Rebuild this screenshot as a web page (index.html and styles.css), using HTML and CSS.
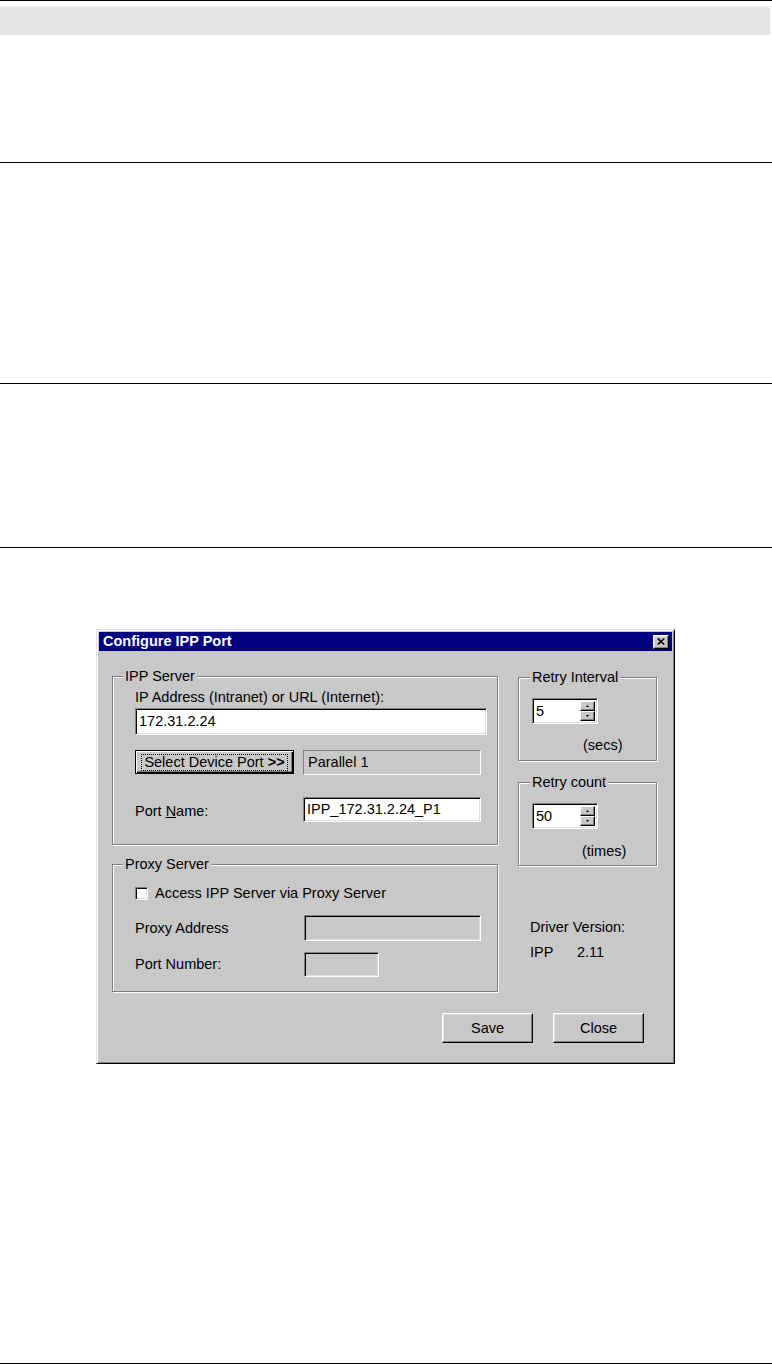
FILE: index.html
```html
<!DOCTYPE html>
<html lang="en">
<head>
    <meta charset="UTF-8">
    <meta name="viewport" content="width=device-width, initial-scale=1.0">
    <title>Configure IPP Port</title>
    <link rel="stylesheet" href="styles.css">
</head>
<body>
    <div class="section section-head">
        <div class="band"></div>
    </div>
    <div class="section section-mid"></div>
    <div class="section section-low"></div>

    <div class="section section-fig">
        <div class="dialog">
            <div class="titlebar">
                <span class="title">Configure IPP Port</span>
                <span class="close-btn">
                    <svg width="8" height="7" viewBox="0 0 8 7"><path d="M0.8 0.5L7.2 6.5M7.2 0.5L0.8 6.5" stroke="#000" stroke-width="1.7"/></svg>
                </span>
            </div>

            <div class="dialog-body">
                <div class="columns">
                    <div class="col-left">
                        <div class="group group-ipp">
                            <span class="legend">IPP Server</span>
                            <div class="field-label">IP Address (Intranet) or URL (Internet):</div>
                            <div class="edit edit-url">172.31.2.24</div>
                            <div class="row row-device">
                                <span class="btn btn-default"><span class="focus">Select Device Port <b>&gt;&gt;</b></span></span>
                                <div class="static static-port">Parallel 1</div>
                            </div>
                            <div class="row row-portname">
                                <span class="row-label">Port <u>N</u>ame:</span>
                                <div class="edit edit-port">IPP_172.31.2.24_P1</div>
                            </div>
                        </div>

                        <div class="group group-proxy">
                            <span class="legend">Proxy Server</span>
                            <div class="row row-check">
                                <span class="checkbox"></span>
                                <span class="check-label">Access IPP Server via Proxy Server</span>
                            </div>
                            <div class="row row-proxy-addr">
                                <span class="row-label proxy-label">Proxy Address</span>
                                <div class="edit edit-disabled edit-proxy"></div>
                            </div>
                            <div class="row row-proxy-port">
                                <span class="row-label proxy-label">Port Number:</span>
                                <div class="edit edit-disabled edit-portnum"></div>
                            </div>
                        </div>
                    </div>

                    <div class="col-right">
                        <div class="group group-retry">
                            <span class="legend">Retry Interval</span>
                            <div class="edit spinbox">
                                <span class="spin-value">5</span>
                                <span class="spin">
                                    <span class="spin-btn"><svg width="3" height="2" viewBox="0 0 3 2"><path d="M1.5 0L3 2H0z" fill="#000"/></svg></span>
                                    <span class="spin-btn"><svg width="3" height="2" viewBox="0 0 3 2"><path d="M0 0h3L1.5 2z" fill="#000"/></svg></span>
                                </span>
                            </div>
                            <div class="unit unit-secs">(secs)</div>
                        </div>

                        <div class="group group-retry group-count">
                            <span class="legend">Retry count</span>
                            <div class="edit spinbox">
                                <span class="spin-value">50</span>
                                <span class="spin">
                                    <span class="spin-btn"><svg width="3" height="2" viewBox="0 0 3 2"><path d="M1.5 0L3 2H0z" fill="#000"/></svg></span>
                                    <span class="spin-btn"><svg width="3" height="2" viewBox="0 0 3 2"><path d="M0 0h3L1.5 2z" fill="#000"/></svg></span>
                                </span>
                            </div>
                            <div class="unit unit-times">(times)</div>
                        </div>

                        <div class="driver">
                            <div>Driver Version:</div>
                            <div class="driver-row"><span class="driver-name">IPP</span><span>2.11</span></div>
                        </div>
                    </div>
                </div>

                <div class="actions">
                    <span class="btn btn-action">Save</span>
                    <span class="btn btn-action">Close</span>
                </div>
            </div>
        </div>
    </div>
</body>
</html>
```

FILE: styles.css
```css
* {
    box-sizing: border-box;
}

body {
    margin: 0;
    background-color: #fff;
    color: #000;
    font-family: "Liberation Sans", Arial, sans-serif;
    font-size: 14.5px;
    line-height: 17px;
}

/* document rules */
.section {
    border-bottom: 1px solid #000;
}

.section-head {
    height: 163px;
    border-top: 1px solid #000;
}

.band {
    margin-top: 6px;
    margin-right: 2px;
    height: 28px;
    background-color: #e4e4e4;
}

.section-mid {
    height: 221px;
}

.section-low {
    height: 164px;
}

.section-fig {
    height: 816px;
    padding-top: 81px;
}

/* dialog window */
.dialog {
    width: 579px;
    height: 435px;
    margin-left: 96px;
    padding: 2px;
    background-color: #c8c8c8;
    border: 1px solid;
    border-color: #dfdfdf #000 #000 #dfdfdf;
    box-shadow: inset 1px 1px #fff, inset -1px -1px #808080;
}

.titlebar {
    height: 19px;
    background-color: #000080;
    display: flex;
    align-items: center;
    justify-content: space-between;
    padding: 0 3px 0 4px;
}

.title {
    color: #fff;
    font-weight: bold;
}

.close-btn {
    width: 16px;
    height: 14px;
    display: flex;
    align-items: center;
    justify-content: center;
    background-color: #c8c8c8;
    border: 1px solid;
    border-color: #fff #000 #000 #fff;
    box-shadow: inset -1px -1px #808080, inset 1px 1px #dfdfdf;
}

.dialog-body {
    padding: 25px 0 0 13px;
}

.columns {
    display: flex;
    gap: 20px;
}

.col-left {
    width: 386px;
}

.col-right {
    width: 139px;
}

/* etched group boxes */
.group {
    border: 1px solid #808080;
    box-shadow: inset 1px 1px #fff, 1px 1px #fff;
}

.legend {
    display: block;
    width: fit-content;
    margin: -9px 0 0 -12px;
    padding: 0 2px;
    background-color: #c8c8c8;
}

.group-ipp {
    height: 169px;
    padding-left: 22px;
}

.group-proxy {
    height: 128px;
    margin-top: 19px;
    padding-left: 22px;
}

.field-label {
    margin-top: 4px;
}

.row {
    display: flex;
}

.row-label {
    width: 168px;
}

/* controls */
.edit {
    display: flex;
    align-items: center;
    padding-left: 3px;
    background-color: #fff;
    border: 1px solid;
    border-color: #808080 #fff #fff #808080;
    box-shadow: inset 1px 1px #000, inset -1px -1px #dfdfdf;
}

.edit-disabled {
    background-color: #c8c8c8;
}

.edit-url {
    width: 352px;
    height: 27px;
    margin-top: 2px;
}

.row-device {
    margin-top: 15px;
}

.btn {
    display: flex;
    align-items: center;
    justify-content: center;
    background-color: #c8c8c8;
    border: 1px solid;
    border-color: #fff #000 #000 #fff;
    box-shadow: inset -1px -1px #808080, inset 1px 1px #dfdfdf;
}

.btn-default {
    width: 159px;
    height: 24px;
    border-color: #000;
    box-shadow: inset 1px 1px #fff, inset -1px -1px #000, inset -2px -2px #808080;
}

.focus {
    border: 1px dotted #000;
    padding: 0 2px;
    line-height: 15px;
}

.static {
    display: flex;
    align-items: center;
    padding-left: 4px;
    border: 1px solid;
    border-color: #808080 #fff #fff #808080;
}

.static-port {
    width: 178px;
    height: 25px;
    margin-left: 9px;
}

.row-portname {
    margin-top: 22px;
}

.row-portname .row-label {
    padding-top: 6px;
}

.edit-port {
    width: 178px;
    height: 25px;
}

.row-check {
    margin-top: 12px;
    align-items: center;
}

.checkbox {
    width: 13px;
    height: 13px;
    background-color: #fff;
    border: 1px solid;
    border-color: #808080 #fff #fff #808080;
    box-shadow: inset 1px 1px #000, inset -1px -1px #dfdfdf;
}

.check-label {
    margin-left: 7px;
}

.proxy-label {
    width: 169px;
}

.row-proxy-addr {
    margin-top: 13px;
    align-items: center;
}

.edit-proxy {
    width: 177px;
    height: 26px;
}

.row-proxy-port {
    margin-top: 11px;
    align-items: center;
}

.edit-portnum {
    width: 75px;
    height: 25px;
}

/* right column */
.group-retry {
    height: 84px;
    margin-top: 1px;
    padding-left: 13px;
}

.group-retry .legend {
    margin-left: -2px;
}

.group-count {
    margin-top: 21px;
}

.spinbox {
    width: 66px;
    height: 26px;
    margin-top: 12px;
    padding: 2px 2px 2px 3px;
    align-items: stretch;
}

.spin-value {
    display: flex;
    align-items: center;
}

.spin {
    margin-left: auto;
    width: 15px;
    display: flex;
    flex-direction: column;
}

.spin-btn {
    flex: 1;
    display: flex;
    align-items: center;
    justify-content: center;
    background-color: #c8c8c8;
    border: 1px solid;
    border-color: #fff #000 #000 #fff;
    box-shadow: inset -1px -1px #808080;
}

.unit-secs {
    margin: 13px 0 0 51px;
}

.unit-times {
    margin: 14px 0 0 50px;
}

.driver {
    margin-top: 53px;
    padding-left: 12px;
}

.driver-row {
    display: flex;
    margin-top: 8px;
}

.driver-name {
    width: 47px;
}

.actions {
    display: flex;
    justify-content: flex-end;
    gap: 20px;
    margin-top: 21px;
    padding-right: 28px;
}

.btn-action {
    width: 91px;
    height: 30px;
}
```
